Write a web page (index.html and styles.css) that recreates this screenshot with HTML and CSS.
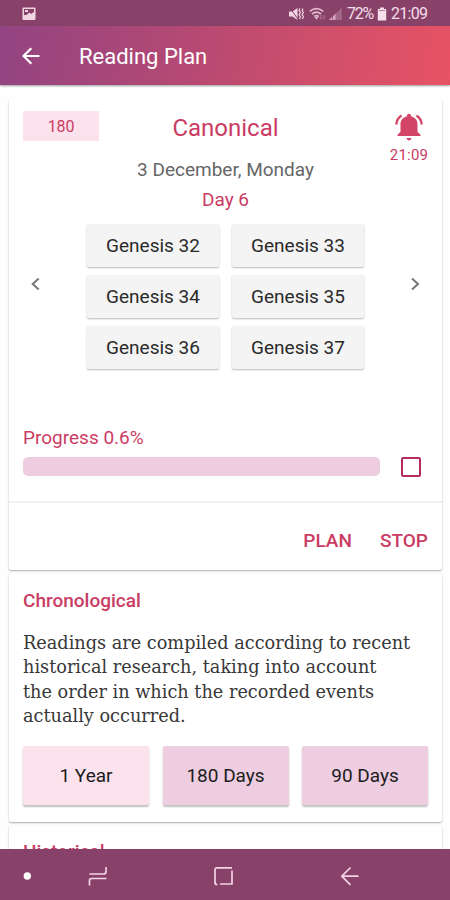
FILE: index.html
```html
<!DOCTYPE html>
<html lang="en">
<head>
<meta charset="utf-8">
<meta name="viewport" content="width=device-width, initial-scale=1">
<title>Reading Plan</title>
<link rel="stylesheet" href="styles.css">
</head>
<body>
<div class="screen">
  <div class="status">
    <svg class="status-photo" width="14" height="14" viewBox="0 0 14 14"><rect x=".5" y=".5" width="13" height="12.5" rx="1" fill="#f0d5e3"/><path d="M2 2h10v3L9 7 7.500 5.500 4.500 8H2z" fill="#88426a"/><path d="M3 3h3v2H3z" fill="#f0d5e3"/></svg>
    <div class="status-right">
      <svg class="mute" width="15" height="14" viewBox="0 0 15 14"><path d="M0 4.500h3.500L8.500 1v12L3.500 9.500H0z" fill="#f0d5e3"/><path d="M1 1l8.500 12" stroke="#88426a" stroke-width="1"/><path d="M11 1.500l-1 2 1.500 2-1.500 2 1.500 2-1 2.500M14 1.500l-1 2 1.500 2-1.500 2 1.500 2-1 2.500" stroke="#f0d5e3" stroke-width="1.200" fill="none"/></svg>
      <svg class="wifi" width="17" height="14" viewBox="0 0 17 14"><g fill="none" stroke="#dfb9ce" stroke-width="1.700"><path d="M.8 4.300Q7.500-1 14.200 4.300M3 7Q7.500 3.300 12 7M5.200 9.500Q7.500 7.700 9.800 9.500"/></g><path d="M5.500 10h4l-2 2.800z" fill="#dfb9ce"/><path d="M12 8v4m-1-1 1 1.500M15 12.500V8.500m1 1-1-1" stroke="#b57c9b" fill="none"/></svg>
      <svg class="signal" width="13" height="12" viewBox="0 0 13 12"><path d="M0 12L12.500 0v12z" fill="#a9718f"/><path d="M0 12l7-6.800V12z" fill="#d5a9c0"/><path d="M3.500 7v5M7 4v8M10 1v11" stroke="#88426a" stroke-width=".6"/></svg>
      <span class="battery-text">72%</span>
      <svg class="battery" width="10" height="14" viewBox="0 0 10 14"><path d="M3 .5h4V2h2.200v11.500H.8V2H3z" fill="#f5dfe9"/><path d="M2 3.500h6" stroke="#b57c9b"/></svg>
      <span class="clock">21:09</span>
    </div>
  </div>
  <header class="appbar">
    <svg width="18" height="18" viewBox="0 0 18 18" fill="none" stroke="#fff" stroke-width="2.200"><path d="M17.500 9H1.800M9.300 1.200L1.500 9l7.800 7.800"/></svg>
    <h1>Reading Plan</h1>
  </header>
  <main class="content">
    <section class="card current">
      <div class="top">
        <span class="badge">180</span>
        <h2>Canonical</h2>
        <div class="alarm">
          <svg width="28" height="28" viewBox="0 0 28 28"><path fill="#d44467" d="M14 .8c1.200 0 2 .8 2 2v.5c4.200 1 6.500 4.200 6.500 8.200v7.300l3 3v1.200h-23v-1.200l3-3v-7.300c0-4 2.300-7.200 6.500-8.200v-.5c0-1.200.8-2 2-2zM11.700 25h4.600c0 1.500-1 2.500-2.300 2.500s-2.300-1-2.300-2.500z"/><path d="M6.500 2.500C3.500 4.500 1.500 7.500 1.300 11.500M21.500 2.500c3 2 5 5 5.200 9" fill="none" stroke="#d44467" stroke-width="2.300"/></svg>
          <span>21:09</span>
        </div>
      </div>
      <p class="date">3 December, Monday</p>
      <p class="day">Day 6</p>
      <div class="chapters">
        <svg width="10" height="14" viewBox="0 0 10 14" fill="none" stroke="#777" stroke-width="2"><path d="M8.700 1.500L2.700 7l6 5.500"/></svg>
        <div class="grid">
          <span>Genesis 32</span><span>Genesis 33</span>
          <span>Genesis 34</span><span>Genesis 35</span>
          <span>Genesis 36</span><span>Genesis 37</span>
        </div>
        <svg width="10" height="14" viewBox="0 0 10 14" fill="none" stroke="#777" stroke-width="2"><path d="M1 1.500l6 5.500-6 5.500"/></svg>
      </div>
      <p class="progress-label">Progress 0.6%</p>
      <div class="progress"><div class="bar"></div><div class="check"></div></div>
      <div class="actions"><span>PLAN</span><span>STOP</span></div>
    </section>
    <section class="card chrono">
      <h3>Chronological</h3>
      <p class="desc"><span>Readings are compiled according to recent</span><span>historical research, taking into account</span><span>the order in which the recorded events</span><span>actually occurred.</span></p>
      <div class="terms"><span class="light">1 Year</span><span>180 Days</span><span>90 Days</span></div>
    </section>
    <section class="card historical">
      <h3>Historical</h3>
    </section>
  </main>
  <nav class="navbar">
    <svg width="450" height="51" viewBox="0 0 450 51" fill="none" stroke="#f4d3e5" stroke-width="1.700"><circle cx="27.300" cy="27" r="3.700" fill="#fff" stroke="none"/><path d="M89.500 25H103.500Q106 25 106 22.500V18M106.500 29.500H91.500Q89.500 29.500 89.500 31.500V36.500M217.500 35.500H217Q215 35.500 215 33.500V21Q215 18.800 217.200 18.800H232M232 21.500V35H220M358.500 27.200H342M350.500 18.500L341.800 27.200l8.700 8.700"/></svg>
  </nav>
</div>
</body>
</html>
```
FILE: styles.css
```css
* { box-sizing: border-box; }
body { margin: 0; font-family: Roboto, sans-serif; background: #fefefe; }
h1, h2, h3, p { margin: 0; font-weight: 400; }
svg { display: block; flex: none; }
.screen { width: 450px; height: 900px; display: flex; flex-direction: column; overflow: hidden; }

.status { flex: none; height: 26px; background: #88426a; display: flex; justify-content: space-between; padding: 2px 22px 0 22px; align-items: center; color: #f4dfe9; }
.status-right { display: flex; align-items: center; font-size: 16px; line-height: 24px; }
.wifi { margin-left: 5px; }
.signal { margin-left: 3px; }
.battery-text { margin-left: 5px; width: 27px; letter-spacing: -1.2px; }
.battery { margin-left: 3px; }
.clock { margin-left: 4px; width: 37px; letter-spacing: -.7px; }

.appbar { flex: none; height: 59px; display: flex; align-items: center; padding: 1px 22px 0; background: linear-gradient(98deg, #924482 0%, #b54973 42%, #cf4f6b 70%, #e75264 100%); box-shadow: 0 1px 2px rgba(0,0,0,.4); color: #fff; z-index: 1; }
.appbar h1 { margin-left: 39px; font-size: 22px; }

.content { flex: 1; min-height: 0; overflow: hidden; padding: 15px 8px 0 9px; display: flex; flex-direction: column; gap: 4px; }
.card { flex: none; background: #fff; border-radius: 2px; box-shadow: 0 1px 2px rgba(0,0,0,.32); }

.current { height: 470px; display: flex; flex-direction: column; color: #cb3c64; }
.top { height: 58px; display: grid; grid-template-columns: 76px 1fr 76px; padding: 11px 14px 0; }
.badge { height: 30px; background: #fbe2ed; font-size: 16px; line-height: 31px; text-align: center; letter-spacing: -.2px; }
.top h2 { font-size: 24px; line-height: 34px; text-align: center; }
.alarm { display: flex; flex-direction: column; align-items: center; padding-left: 38px; padding-top: 2px; font-size: 15px; }
.alarm span { line-height: 20px; margin-top: 4px; letter-spacing: .2px; }
.date { height: 24px; line-height: 24px; font-size: 19px; text-align: center; color: #666; }
.day { height: 42px; line-height: 36px; font-size: 19px; text-align: center; }
.chapters { height: 200px; display: flex; justify-content: space-between; padding: 0 21px; }
.chapters > svg { margin-top: 53px; }
.grid { display: grid; grid-template-columns: 132px 132px; grid-auto-rows: 43px; gap: 8px 13px; align-content: start; }
.grid span { background: #f4f4f4; border-radius: 2px; box-shadow: 0 1px 2px rgba(0,0,0,.28); color: #2a2a2a; font-size: 19px; line-height: 44px; text-align: center; }
.progress-label { padding-left: 14px; font-size: 19px; line-height: 28px; }
.progress { height: 49px; padding: 5px 21px 0 14px; display: flex; gap: 21px; flex: none; }
.bar { width: 357px; height: 19px; background: #edcddf; border-radius: 5px; }
.check { width: 20px; height: 20px; border: 2px solid #b62b60; border-radius: 2px; }
.actions { flex: 1; border-top: 2px solid #f1f1f1; display: flex; justify-content: flex-end; gap: 28px; padding: 25px 14px 0; font-weight: 500; font-size: 19px; line-height: 26px; }

.chrono { height: 248px; padding: 14px 14px 0; }
h3 { font-size: 19px; font-weight: 500; line-height: 26px; color: #cb3c64; }
.desc { margin-top: 17px; font-family: "DejaVu Serif", serif; font-size: 17.700px; line-height: 24.400px; color: #383838; }
.desc span { display: block; white-space: nowrap; }
.terms { display: grid; grid-template-columns: repeat(3, 126px); justify-content: space-between; margin-top: 17px; }
.terms span { height: 59px; border-radius: 2px; background: #edcddf; box-shadow: 0 2px 2px rgba(0,0,0,.25); text-align: center; font-size: 19px; line-height: 60px; color: #1c1c1c; }
.terms .light { background: #fbe2ed; }
.historical { height: 100px; padding: 13px 14px; }
.navbar { flex: none; height: 51px; background: #88426a; z-index: 1; }
```
